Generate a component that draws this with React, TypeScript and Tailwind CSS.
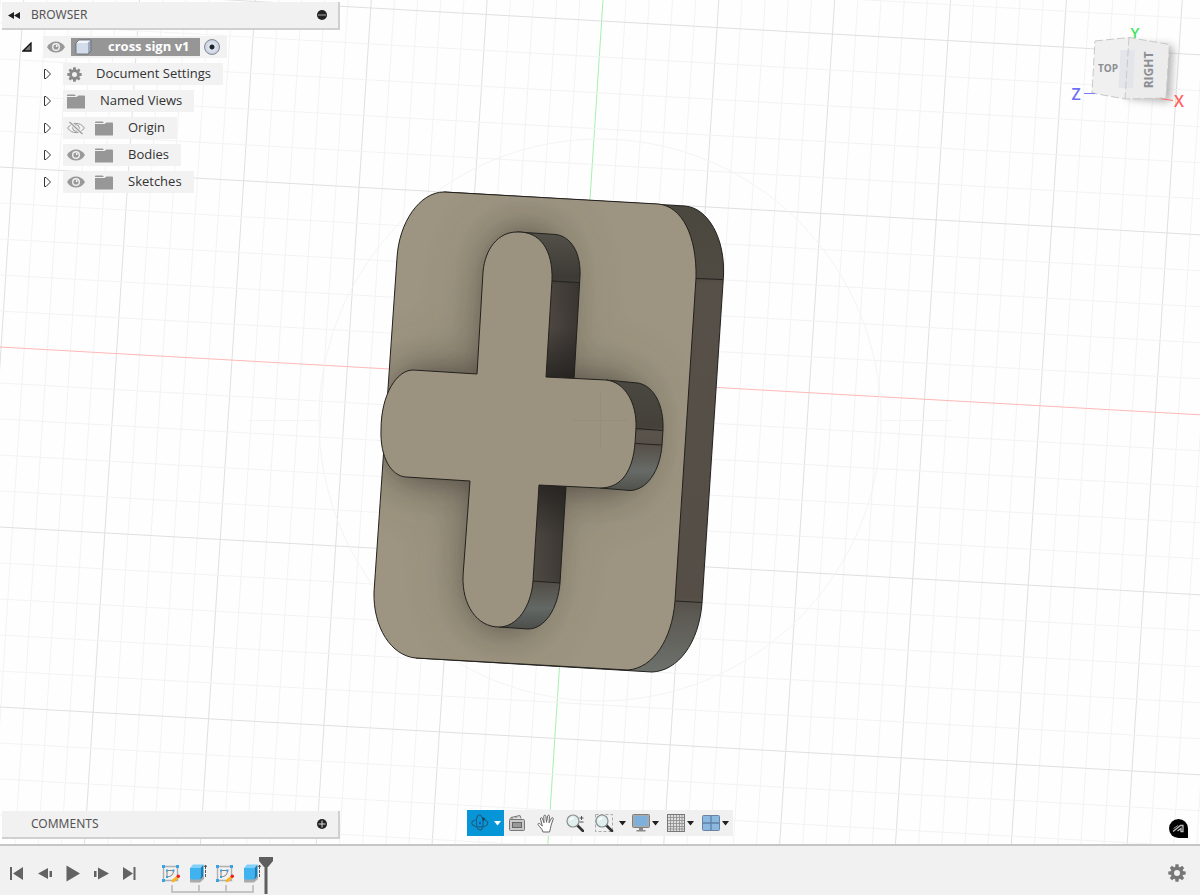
import { useState } from 'react'

const PLATE = 'M397 258 C399 222 420 192 444 192 L658 204 C682 206 697 236 696 278 L675 601 C672 640 653 668 628 670 L416 658 C391 656 373 627 374 592 Z'
const CROSS = 'M483 272 C485 249 498 232 517 232 C540 231 553 250 552 280 L546 377 L606 380 C625 382 637 403 636 428 L635 443 C633 469 623 488 600 488 L539 485 L533 581 C531 607 517 627 499 627 C477 627 462 605 463 576 L470 481 L406 477 C391 476 380 457 381 430 C381 394 397 370 413 370 L477 374 Z'

const vLines = Array.from({ length: 60 }, (_, k) => k - 29)
const hLines = Array.from({ length: 27 }, (_, k) => k - 12)

function Grid() {
  return (
    <g fill="none" strokeWidth="1">
      {vLines.map(i => {
        const x = 603 + i * 23.17
        return <line key={i} x1={x} y1="0" x2={x - 55.2} y2="846" stroke={i === 0 ? '#a6f0ae' : i % 5 === 0 ? '#e0e0e0' : '#f3f3f3'} />
      })}
      {hLines.map(j => {
        const y = 347 + j * 36
        return <line key={j} x1="0" y1={y} x2="1200" y2={y + 67.8} stroke={j === 0 ? '#ffb8b8' : j % 5 === 0 ? '#e0e0e0' : '#f3f3f3'} />
      })}
      <g stroke="#f4f4f4">
        <circle cx="600" cy="420" r="281" />
        <path d="M248 420.5H319M881 420.5H952" />
      </g>
    </g>
  )
}

function Model() {
  return (
    <g strokeLinejoin="round">
      <defs>
        <clipPath id="plate"><path d={PLATE} /></clipPath>
        <filter id="soft" x="-30%" y="-30%" width="160%" height="160%"><feGaussianBlur stdDeviation="16" /></filter>
        <filter id="wide" x="-50%" y="-50%" width="200%" height="200%"><feGaussianBlur stdDeviation="32" /></filter>
        <linearGradient id="plateSide" x1="0" y1="204" x2="0" y2="672" gradientUnits="userSpaceOnUse">
          <stop offset="0" stopColor="#4a473f" /><stop offset=".16" stopColor="#504b42" />
          <stop offset=".17" stopColor="#565048" /><stop offset=".84" stopColor="#544e46" />
          <stop offset=".88" stopColor="#5d5a54" /><stop offset="1" stopColor="#6d716c" />
        </linearGradient>
        <linearGradient id="topSide" x1="0" y1="232" x2="0" y2="378" gradientUnits="userSpaceOnUse">
          <stop offset="0" stopColor="#535149" /><stop offset=".32" stopColor="#3d3a35" />
          <stop offset=".36" stopColor="#4c4640" /><stop offset=".65" stopColor="#504843" /><stop offset="1" stopColor="#2a2825" />
        </linearGradient>
        <linearGradient id="rightSide" x1="0" y1="380" x2="0" y2="490" gradientUnits="userSpaceOnUse">
          <stop offset="0" stopColor="#4a4841" /><stop offset=".43" stopColor="#454139" />
          <stop offset=".47" stopColor="#5b544d" /><stop offset=".6" stopColor="#575049" />
          <stop offset=".82" stopColor="#676b67" /><stop offset="1" stopColor="#52524c" />
        </linearGradient>
        <linearGradient id="bottomSide" x1="0" y1="485" x2="0" y2="628" gradientUnits="userSpaceOnUse">
          <stop offset="0" stopColor="#2c2926" /><stop offset=".35" stopColor="#4d4741" />
          <stop offset=".66" stopColor="#504a44" /><stop offset=".86" stopColor="#636864" /><stop offset="1" stopColor="#4d4f4b" />
        </linearGradient>
        <linearGradient id="innerDark" x1="0" x2="1">
          <stop offset="0" stopColor="#1d1b19" stopOpacity="0" /><stop offset="1" stopColor="#1d1b19" stopOpacity=".4" />
        </linearGradient>
      </defs>

      <g stroke="#23211e">
        <path d="M444 192 L685 206 C708 208 725 238 723.5 275 L702 603 C699 643 678 671 652 672 L416 658 Z" fill="url(#plateSide)" />
        <path d={PLATE} fill="#9d9581" />
        <path d="M696 278.500L723 279.500M675.500 601L702 602.500" />
      </g>

      {/* contact shadow the cross leaves on the plate */}
      <g clipPath="url(#plate)" fill="#3f3a36">
        <path d={CROSS} opacity=".4" filter="url(#wide)" transform="translate(6 0)" />
        <path d={CROSS} opacity=".72" filter="url(#soft)" transform="translate(8 1)" />
      </g>

      <g stroke="#23211e">
        <path d="M517 232 L556 234.500 C572 237 581 254 580 276 L574 379 L546 377 Z" fill="url(#topSide)" />
        <path d="M606 380 L638 383 C654 386 664 405 663 430 L662 445 C660 471 647 490 630 490.500 L600 488 Z" fill="url(#rightSide)" />
        <path d="M539 485 L566 486 L560 583 C558 608 545 629 528 629 L499 627 Z" fill="url(#bottomSide)" />
        <path d="M552 281L579.500 282.500M636 428.500L663 430.500M635 443.500L662 445M533 581L560 583" />
      </g>
      <path d="M552 281L579.500 282.500L574 379L546 377Z" fill="url(#innerDark)" />
      <path d="M539 485L566 486L560 583L533 581Z" fill="url(#innerDark)" />
      <path d={CROSS} fill="#9b937f" stroke="#23211e" />
      <path d="M572 420.500H628M600.500 392V448" stroke="#968e7b" fill="none" />
    </g>
  )
}

function ViewCube() {
  return (
    <svg viewBox="1060 20 140 100" className="mt-5 h-[100px] w-[140px] shrink-0" fontFamily='"Open Sans", sans-serif'>
      <defs>
        <filter id="cubeShadow" x="-40%" y="-40%" width="180%" height="180%"><feGaussianBlur stdDeviation="4" /></filter>
      </defs>
      <path d="M1130 44L1173 46L1170 102L1128 98Z" fill="#777" opacity=".6" filter="url(#cubeShadow)" />
      <path d="M1160 98.500L1173 100.500" stroke="#ff6b6b" />
      <path d="M1095 41L1129 37.500L1125 99L1092 93Z" fill="#f0f0f0" />
      <path d="M1129 37.500L1169.500 44.500L1166 98L1125 99Z" fill="#ececed" />
      <path d="M1120.500 50H1135L1133 88H1118.500Z" fill="#e3e5eb" />
      <path d="M1095 41L1129 37.500L1169.500 44.500L1166 98L1125 99L1092 93ZM1129 37.500L1125 99" fill="none" stroke="#c8c8c8" strokeDasharray="8 3" />
      <path d="M1084 93.500H1095" stroke="#7a7af5" />
      <text x="1108" y="72" textAnchor="middle" fontSize="10" fontWeight="700" fill="#8b8e94">TOP</text>
      <text transform="translate(1153 70) rotate(-90)" textAnchor="middle" fontSize="12" fontWeight="700" fill="#8b8e94">RIGHT</text>
      <text x="1135" y="38" textAnchor="middle" fontSize="15" fontWeight="600" fill="#3fe35f">Y</text>
      <text x="1076" y="100" textAnchor="middle" fontSize="16" fontWeight="600" fill="#6f6ff5">Z</text>
      <text x="1179" y="107" textAnchor="middle" fontSize="16" fontWeight="600" fill="#ff6262">X</text>
    </svg>
  )
}

function Eye({ off }: { off?: boolean }) {
  return off ? (
    <svg width="18" height="14" viewBox="0 0 18 14" fill="none" stroke="#9a9a9a">
      <path d="M.7 7C4.500.8 13.500.8 17.300 7C13.500 13.200 4.500 13.200.7 7Z" />
      <circle cx="9" cy="7" r="3.300" /><circle cx="9" cy="7" r="1" fill="#9a9a9a" />
      <path d="M2.500 1L15.500 13" stroke="#f2f2f2" strokeWidth="3" /><path d="M2.500 1L15.500 13" strokeWidth="1.200" />
    </svg>
  ) : (
    <svg width="18" height="14" viewBox="0 0 18 14">
      <path d="M0 7C4-.4 14-.4 18 7C14 14.400 4 14.400 0 7Z" fill="#999" />
      <circle cx="9" cy="7" r="4" fill="#f2f2f2" /><circle cx="9" cy="7" r="2.600" fill="#999" /><circle cx="9.700" cy="6" r=".9" fill="#fff" />
    </svg>
  )
}

function Folder() {
  return (
    <svg width="18" height="15" viewBox="0 0 18 15" fill="#979797">
      <path d="M0 1.500Q0 .5 1 .5H7.500L9 2H0Z" />
      <path d="M0 3H9.500L11.500 1.500H17Q18 1.500 18 2.500V14.500H0Z" />
    </svg>
  )
}

function Gear({ size, hole, color }: { size: number; hole: string; color: string }) {
  return (
    <svg width={size} height={size} viewBox="-9 -9 18 18" fill={color}>
      {[0, 45, 90, 135, 180, 225, 270, 315].map(a => (
        <path key={a} d="M-2 -5L-1.500 -8.700H1.500L2 -5Z" transform={`rotate(${a})`} />
      ))}
      <circle r="6.300" /><circle r="3" fill={hole} />
    </svg>
  )
}

function Caret({ color = '#1f1f1f' }: { color?: string }) {
  return <svg width="7" height="5" viewBox="0 0 7 5"><path d="M0 0H7L3.500 4.500Z" fill={color} /></svg>
}

function PanelHeader({ title, open, className }: { title: string; open: boolean; className: string }) {
  return (
    <div className={`flex h-[28px] w-[338px] items-center border-r-2 border-b-2 border-[#d0d0d0] bg-[#f1f1f1] text-[12px] text-[#555] ${className}`}>
      <span className="flex w-[29px] pl-[6px]">
        {open && (
          <button aria-label="Collapse browser">
            <svg width="12" height="7" viewBox="0 0 12 7" fill="#1f1f1f"><path d="M6 0V7L0 3.500ZM12 0V7L6 3.500Z" /></svg>
          </button>
        )}
      </span>
      <h2 className="flex-1">{title}</h2>
      <button className="mr-[11px]" aria-label={open ? 'Hide ' + title : 'Show ' + title}>
        <svg width="10" height="10" viewBox="0 0 10 10">
          <circle cx="5" cy="5" r="5" fill="#222" />
          {open ? <path d="M1 5H9" stroke="#aaa" /> : <path d="M1.500 5H8.500M5 1.500V8.500" stroke="#ddd" />}
        </svg>
      </button>
    </div>
  )
}

const rows = [
  { label: 'Document Settings', icon: 'gear' },
  { label: 'Named Views', icon: 'folder' },
  { label: 'Origin', icon: 'folder', eye: 'off' },
  { label: 'Bodies', icon: 'folder', eye: 'on' },
  { label: 'Sketches', icon: 'folder', eye: 'on' },
]

function BrowserTree() {
  return (
    <ul className="mt-[6px] flex flex-col gap-[5px] font-['Open_Sans',sans-serif] text-[13px] text-[#333]">
      <li className="flex h-[22px] items-center pl-[22px]">
        <button className="w-[21px]" aria-label="Collapse cross sign">
          <svg width="10" height="10" viewBox="0 0 10 10"><path d="M9 1V9H1Z" fill="#777" stroke="#111" strokeWidth="1.300" /></svg>
        </button>
        <div className="flex h-full items-center bg-[#f2f2f2] pr-[7px]">
          <button className="mx-[4px]" aria-label="Toggle visibility"><Eye /></button>
          <span className="ml-[2px] flex h-[18px] items-center bg-[#969696] pr-[11px] pl-[4px] font-bold text-white">
            <svg width="17" height="17" viewBox="0 0 17 17" className="mr-[16px]">
              <path d="M4 1H16L13 4H1Z" fill="#f3f6fb" />
              <path d="M1 4.500Q1 4 2 4H12Q13 4 13 5V15H2Q1 15 1 14Z" fill="#d3dcea" />
              <path d="M13 4L16 1V12L13 15Z" fill="#9caabd" />
              <path d="M4 1H16V12L13 15H2Q1 15 1 14V4Z" fill="none" stroke="#5f6977" strokeWidth=".8" />
            </svg>
            cross sign v1
          </span>
          <input
            type="radio" name="active" defaultChecked aria-label="Activate cross sign v1"
            className="ml-[4px] size-[16px] appearance-none rounded-full border border-[#858b95] bg-[radial-gradient(circle,#1c2430_0_2px,#e4e9f2_3px,#c5cedd_7px)]"
          />
        </div>
      </li>
      {rows.map(row => (
        <li key={row.label} className="flex h-[22px] items-center pl-[43px]">
          <button className="w-[20px]" aria-label={'Expand ' + row.label}>
            <svg width="9" height="12" viewBox="0 0 9 12"><path d="M1.500 1.500V10.500H3L7.500 6L3 1.500Z" fill="#fff" stroke="#333" /></svg>
          </button>
          <div className="flex h-full items-center bg-[#f2f2f2] pr-[12px] pl-[4px]">
            {row.eye && <button className="mr-[10px]" aria-label={'Toggle ' + row.label}><Eye off={row.eye === 'off'} /></button>}
            {row.icon === 'gear' ? <Gear size={15} hole="#f2f2f2" color="#8a8a8a" /> : <Folder />}
            <span className={row.icon === 'gear' ? 'ml-[14px]' : 'ml-[15px]'}>{row.label}</span>
          </div>
        </li>
      ))}
    </ul>
  )
}

function Lens() {
  return (
    <>
      <path d="M11 11L17 17" stroke="#333" strokeWidth="2.600" strokeLinecap="round" />
      <circle cx="7" cy="7" r="6" fill="#e0efee" stroke="#8a8f90" strokeWidth="1.200" />
      <path d="M4 6.500Q5 4 7.500 4" stroke="#fff" fill="none" strokeWidth="1.500" />
    </>
  )
}

function NavToolbar() {
  return (
    <div className="mb-[8px] flex h-[26px] items-center self-end bg-[#f0f0f0]">
      <button className="flex h-full w-[37px] items-center gap-[5px] bg-[#0696d7] pl-[4px]" aria-label="Orbit">
        <svg width="18" height="18" viewBox="0 0 18 18" fill="none" stroke="#1f5d80" strokeWidth="1.100">
          <path d="M7.500 15C5 15 4.500 4 7 1.500C9 0 12 2 12 8.500C12.500 15 9.500 18 7.500 15Z" />
          <path d="M4.500 6C-.5 7 -.5 11 4.500 12.300C9 13.300 15 13 16.500 10.500C17.500 8 15.500 6.500 13 5.500" />
          <path d="M11 3L14.500 4.500L12 7.500Z" fill="#1f4058" stroke="none" /><circle cx="9" cy="9" r="1.200" fill="#1558c0" stroke="none" />
        </svg>
        <Caret color="#fff" />
      </button>
      <button className="ml-[4px] w-[18px]" aria-label="Look at">
        <svg width="18" height="18" viewBox="0 0 18 18" fill="none" stroke="#777">
          <path d="M1.500 5.500L3 3.500L12 1.500L13 4.500" fill="#ddd" /><path d="M4 3.500V5M8 2.500V4" />
          <rect x="1.500" y="5.500" width="15" height="11" rx="1" fill="#c9c9c9" /><rect x="4.500" y="8.500" width="9" height="5" fill="#999" stroke="#666" />
        </svg>
      </button>
      <button className="ml-[11px] w-[19px]" aria-label="Pan">
        <svg width="19" height="19" viewBox="0 0 19 19" fill="#fff" stroke="#666" strokeLinejoin="round">
          <path d="M6 18C5.500 15 2.500 13 1 10.500C.8 9.200 2.300 9 3.200 10L5.300 12L3.500 5C3.300 3.500 5 3.200 5.500 4.600L7 8.800L6.800 2.200C6.900.8 8.600.8 8.800 2.200L9.500 8.300L10.700 2C11 .8 12.600 1 12.500 2.400L12 8.900L14.500 4.200C15.300 3 16.600 3.800 16.200 5L14 11.500C13.800 14 13 15.500 12.500 18Z" />
        </svg>
      </button>
      <button className="ml-[10px] w-[18px]" aria-label="Zoom">
        <svg width="18" height="18" viewBox="0 0 18 18"><Lens /><path d="M13.500 4H17.500M15.500 2V6M13.500 8H17.500" stroke="#555" /></svg>
      </button>
      <button className="ml-[11px] flex items-center gap-[5px]" aria-label="Fit">
        <svg width="19" height="18" viewBox="0 0 19 18"><rect x=".5" y=".5" width="17" height="17" fill="none" stroke="#aaa" strokeDasharray="3 2" /><Lens /></svg>
        <Caret />
      </button>
      <button className="ml-[6px] flex items-center gap-[2px]" aria-label="Display settings">
        <svg width="18" height="18" viewBox="0 0 18 18">
          <rect x=".5" y=".5" width="17" height="13" rx="1" fill="#aaa" stroke="#808080" /><rect x="2.500" y="2" width="13" height="10" fill="#7fb0dc" />
          <path d="M7 14H11V16H13.500V17.500H4.500V16H7Z" fill="#888" />
        </svg>
        <Caret />
      </button>
      <button className="ml-[8px] flex items-center gap-[2px]" aria-label="Grid and snaps">
        <svg width="18" height="18" viewBox="0 0 18 18">
          <rect x=".5" y=".5" width="17" height="17" fill="#ddd" stroke="#777" />
          <path d="M3.500 1V17M6.500 1V17M9.500 1V17M12.500 1V17M15 1V17M1 3.500H17M1 6.500H17M1 9.500H17M1 12.500H17M1 15H17" stroke="#8c8c8c" strokeWidth=".8" />
        </svg>
        <Caret />
      </button>
      <button className="mr-[4px] ml-[8px] flex items-center gap-[2px]" aria-label="Viewports">
        <svg width="18" height="16" viewBox="0 0 18 16">
          <rect x=".5" y=".5" width="17" height="15" rx="1" fill="#8ab8de" stroke="#6b83a3" /><path d="M9 1V15M1 8H17" stroke="#5f7fa5" strokeWidth="1.300" />
        </svg>
        <Caret />
      </button>
    </div>
  )
}

const playback = [
  { label: 'To start', d: 'M1 2H3V15H1ZM14 2V15L4 8.500Z' },
  { label: 'Step back', d: 'M11 3V14L1 8.500ZM12.500 6H15V12H12.500Z' },
  { label: 'Play', d: 'M1.500 .5L15 8.500L1.500 16.500Z' },
  { label: 'Step forward', d: 'M5 2.500L16 8.500L5 14.500ZM1 6H3.500V12H1Z' },
  { label: 'To end', d: 'M2 2L12 8.500L2 15ZM12.500 2H14.500V15H12.500Z' },
]

function SketchIcon() {
  return (
    <svg width="18" height="18" viewBox="0 0 18 18" fill="none">
      <path d="M1.500 1.500H15.500V15.500H1.500Z" stroke="#b0b0b0" strokeWidth="1.400" />
      <path d="M5 5.500H11.500Q11.500 11.500 5 12Z" stroke="#808080" />
      <path d="M0 0H3V3H0ZM14 0H17V3H14ZM0 14H3V17H0ZM4 4.500H6V6.500H4ZM10.500 4.500H12.500V6.500H10.500ZM4 11H6V13H4Z" fill="#36a4e6" />
      <path d="M9.500 17.500L10.500 14.500L14.500 11L16.500 13L12.500 16.800Z" fill="#fbb321" /><circle cx="16.300" cy="11.200" r="1.700" fill="#ee1c25" />
    </svg>
  )
}

function ExtrudeIcon() {
  return (
    <svg width="18" height="19" viewBox="0 0 18 19">
      <path d="M1 15V17.500Q1 18.500 2 18.500H11L15 15V12Z" fill="#aaa" />
      <path d="M4 .5H14.500L11.500 4H1Z" fill="#7fd0fb" /><path d="M1 4H11.500V15.500H2.500Q1 15.500 1 14Z" fill="#3fb2ef" /><path d="M11.500 4L14.500.5V12L11.500 15.500Z" fill="#1280bd" />
      <path d="M16.500 2V13" stroke="#444" strokeWidth=".9" strokeDasharray="3 1" /><path d="M15.500 3L16.500 1L17.500 3" stroke="#333" fill="none" strokeWidth=".9" />
    </svg>
  )
}

export default function App() {
  const [selected, setSelected] = useState('')

  return (
    <div className="flex h-screen flex-col overflow-hidden bg-[#f1f1f1] font-['Noto_Sans',sans-serif]">
      <main className="relative flex min-h-0 flex-1 flex-col justify-between bg-[#fefefe]">
        <svg className="absolute inset-0 h-full w-full" viewBox="0 0 1200 844" preserveAspectRatio="xMidYMid slice">
          <Grid />
          <Model />
        </svg>

        <div className="relative flex items-start justify-between">
          <aside>
            <PanelHeader title="BROWSER" open className="mt-[2px] ml-[2px]" />
            <BrowserTree />
          </aside>
          <ViewCube />
        </div>

        <div className="relative grid grid-cols-[1fr_auto_1fr]">
          <PanelHeader title="COMMENTS" open={false} className="mb-[5px] ml-[2px] self-end" />
          <NavToolbar />
          <button className="mr-[12px] mb-[6px] self-end justify-self-end" aria-label="Assistant">
            <svg width="19" height="19" viewBox="0 0 19 19">
              <path d="M9.500 0A9.500 9.500 0 0 1 19 9.500V19H9.500A9.500 9.500 0 0 1 9.500 0Z" fill="#000" />
              <path d="M4 12.500L11.500 6.500H14V12.500H12V9.500L8.500 12" fill="none" stroke="#bbb" strokeWidth="1.300" /><path d="M4.500 9.500L9 6.500" stroke="#999" />
            </svg>
          </button>
        </div>
      </main>

      <footer className="flex h-[51px] shrink-0 items-start border-t-2 border-[#c6c6c6] pl-[3px]">
        <div className="flex pt-[19px]">
          {playback.map(p => (
            <button key={p.label} aria-label={p.label} className="flex w-[28px] justify-center">
              <svg width="17" height="17" viewBox="0 0 17 17" fill="#636363"><path d={p.d} /></svg>
            </button>
          ))}
        </div>
        <div className="relative ml-[14px] pt-[17px]">
          <div className="flex h-[21px]">
            {['Sketch1', 'Extrude1', 'Sketch2', 'Extrude2'].map(name => (
              <button key={name} aria-label={name} aria-pressed={selected === name} onClick={() => setSelected(name)} className="flex w-[27px] items-center justify-center">
                {name.startsWith('Sketch') ? <SketchIcon /> : <ExtrudeIcon />}
              </button>
            ))}
          </div>
          <svg width="108" height="9" viewBox="0 0 108 9" fill="none" stroke="#c4c4c4" strokeWidth="2">
            <path d="M15 1V8H96V1M42 1V8M69 1V8" />
          </svg>
          <svg width="14" height="37" viewBox="0 0 14 37" className="absolute top-[11px] left-[102px]">
            <path d="M0 0H14V4L9 10H8.500V37H5.500V10H5L0 4Z" fill="#5e5e5e" />
          </svg>
        </div>
        <button className="mt-[18px] mr-[14px] ml-auto" aria-label="Timeline settings">
          <Gear size={18} hole="#f1f1f1" color="#777" />
        </button>
      </footer>
    </div>
  )
}
